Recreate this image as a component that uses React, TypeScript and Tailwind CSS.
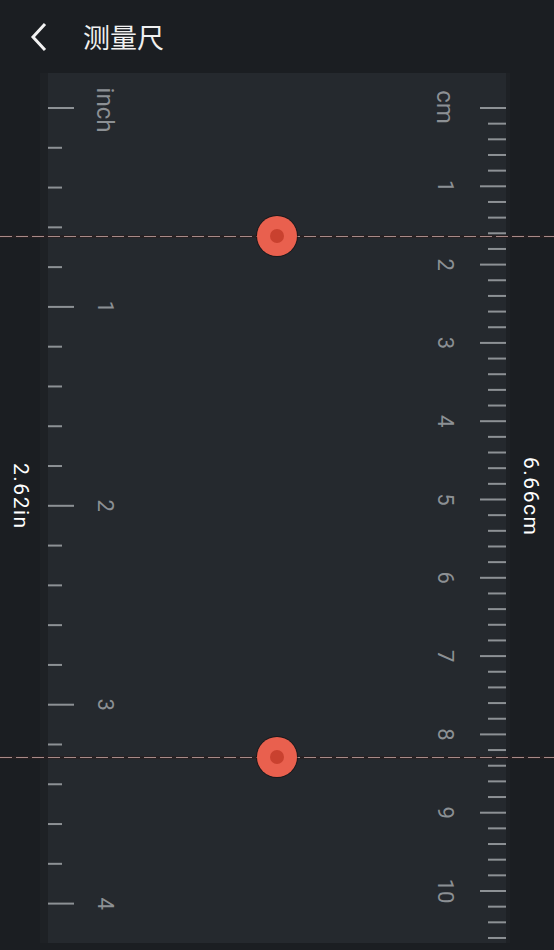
import React from 'react';

const CM = 78.3;
const INCH = 198.9;
const ORIGIN = 35; // y of the zero tick inside the ruler panel
const PANEL_W = 458;
const PANEL_H = 870;
const TICK = '#8d9195';
const LABEL = '#8c9094';

const Ruler: React.FC = () => {
  const cmTicks: React.ReactNode[] = [];
  for (let i = 0; ORIGIN + i * (CM / 5) < PANEL_H; i++) {
    const y = ORIGIN + i * (CM / 5);
    const long = i % 5 === 0;
    cmTicks.push(
      <rect key={`c${i}`} x={PANEL_W - (long ? 26 : 18)} y={y - 1} width={long ? 26 : 18} height={2} fill={TICK} />
    );
    if (long && i > 0) {
      const n = i / 5;
      cmTicks.push(
        <text
          key={`cl${i}`}
          x={397}
          y={y}
          transform={`rotate(90 397 ${y})`}
          textAnchor="middle"
          dominantBaseline="central"
          fill={LABEL}
          fontSize={22}
          fontFamily="Roboto, sans-serif"
        >
          {n}
        </text>
      );
    }
  }

  const inTicks: React.ReactNode[] = [];
  for (let i = 0; ORIGIN + i * (INCH / 5) < PANEL_H; i++) {
    const y = ORIGIN + i * (INCH / 5);
    const long = i % 5 === 0;
    inTicks.push(<rect key={`i${i}`} x={0} y={y - 1} width={long ? 26 : 14} height={2} fill={TICK} />);
    if (long && i > 0) {
      const n = i / 5;
      inTicks.push(
        <text
          key={`il${i}`}
          x={57}
          y={y}
          transform={`rotate(90 57 ${y})`}
          textAnchor="middle"
          dominantBaseline="central"
          fill={LABEL}
          fontSize={22}
          fontFamily="Roboto, sans-serif"
        >
          {n}
        </text>
      );
    }
  }

  return (
    <svg width={PANEL_W} height={PANEL_H} className="block">
      {inTicks}
      {cmTicks}
      <text
        x={57}
        y={37}
        transform="rotate(90 57 37)"
        textAnchor="middle"
        dominantBaseline="central"
        fill={LABEL}
        fontSize={24}
        fontFamily="Roboto, sans-serif"
      >
        inch
      </text>
      <text
        x={397}
        y={34}
        transform="rotate(90 397 34)"
        textAnchor="middle"
        dominantBaseline="central"
        fill={LABEL}
        fontSize={24}
        fontFamily="Roboto, sans-serif"
      >
        cm
      </text>
    </svg>
  );
};

const DashLine: React.FC<{ className: string }> = ({ className }) => (
  <div className={`absolute left-0 right-0 h-[3px] bg-[#2a1f21]/70 flex items-center ${className}`}>
    <div className="h-px w-full bg-[repeating-linear-gradient(90deg,#a88a88_0px,#a88a88_12px,transparent_12px,transparent_16px)]" />
  </div>
);

const Handle: React.FC<{ className: string }> = ({ className }) => (
  <div
    className={`absolute left-[257px] w-[40px] h-[40px] rounded-full bg-[#e9604e] shadow-[0_0_0_1px_rgba(20,10,10,0.5)] flex items-center justify-center ${className}`}
  >
    <div className="w-[14px] h-[14px] rounded-full bg-[#c9412f]" />
  </div>
);

export default function App() {
  return (
    <div className="w-[554px] h-[950px] bg-[#1b1e22] flex flex-col relative overflow-hidden font-['Roboto',sans-serif]">
      {/* header */}
      <header className="h-[73px] shrink-0 flex items-center">
        <svg width="20" height="30" viewBox="0 0 20 30" className="ml-[29px]">
          <polyline points="16,2 4,15 16,28" fill="none" stroke="#f2f2f2" strokeWidth="3" />
        </svg>
        <h1 className="ml-[34px] text-[27px] leading-none text-[#f0f0f0] font-['Noto_Sans_CJK_SC',sans-serif] font-normal">
          测量尺
        </h1>
      </header>

      {/* ruler body */}
      <div className="flex h-[870px] shrink-0">
        <div className="w-[48px] flex">
          <div className="w-[40px]" />
          <div className="w-[8px] bg-[#1e2125]" />
        </div>
        <div className="w-[458px] bg-[#25292e]">
          <Ruler />
        </div>
        <div className="w-[48px] flex">
          <div className="w-[4px] bg-[#1e2125]" />
        </div>
      </div>

      {/* measurement overlay */}
      <div className="absolute left-0 right-0 top-[236px] h-[521px]">
        <DashLine className="-top-[1px]" />
        <DashLine className="-bottom-[2px]" />
        <Handle className="-top-[20px]" />
        <Handle className="-bottom-[20px]" />
        <div className="flex h-full justify-between items-center">
          <div className="w-[40px] flex justify-center">
            <span className="[writing-mode:vertical-rl] text-[21px] tracking-[1.5px] text-white leading-none">2.62in</span>
          </div>
          <div className="w-[48px] flex justify-center">
            <span className="[writing-mode:vertical-rl] text-[21px] tracking-[1.5px] text-white leading-none">6.66cm</span>
          </div>
        </div>
      </div>
    </div>
  );
}
